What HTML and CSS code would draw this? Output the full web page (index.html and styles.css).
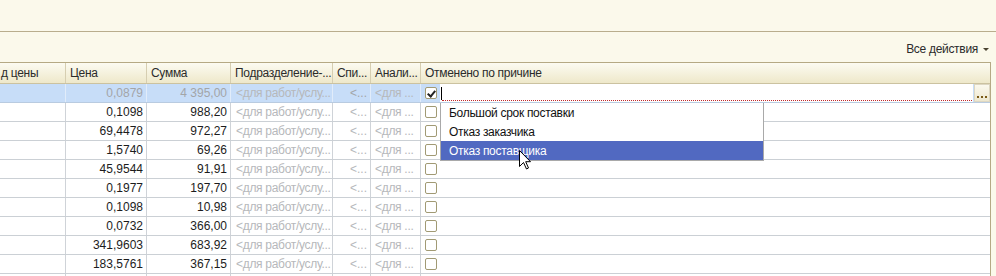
FILE: index.html
```html
<!DOCTYPE html>
<html lang="ru">
<head>
    <meta charset="UTF-8">
    <title>Товары</title>
    <link rel="stylesheet" href="styles.css">
</head>
<body>
    <div class="top"></div>
    <div class="toolbar">
        <span class="actions">Все действия <span class="arrow"></span></span>
    </div>

    <div class="grid">
        <div class="row head">
            <div class="cell c1">д цены</div>
            <div class="cell c2">Цена</div>
            <div class="cell c3">Сумма</div>
            <div class="cell c4">Подразделение-...</div>
            <div class="cell c5">Спи...</div>
            <div class="cell c6">Анали...</div>
            <div class="cell c7">Отменено по причине</div>
        </div>

        <div class="row sel">
            <div class="cell c1"></div>
            <div class="cell c2 num">0,0879</div>
            <div class="cell c3 num">4 395,00</div>
            <div class="cell c4 hint">&lt;для работ/услу...</div>
            <div class="cell c5 hint num">&lt;...</div>
            <div class="cell c6 hint">&lt;для ...</div>
            <div class="cell c7">
                <span class="check on"></span>
                <span class="edit"><span class="caret"></span></span>
                <span class="more"><i></i><i></i><i></i></span>
            </div>
        </div>
        <div id="rows"></div>

        <ul class="dropdown">
            <li>Большой срок поставки</li>
            <li>Отказ заказчика</li>
            <li class="active">Отказ поставщика</li>
        </ul>

        <svg class="pointer" width="13" height="20" viewBox="0 0 13 20">
            <path d="M0.5 0.5 L0.5 16.5 L4.5 12.5 L7.5 19 L9.5 18 L6.7 11.7 L11.5 11.7 Z" fill="#fff" stroke="#000" stroke-width="1"/>
        </svg>
    </div>

    <script>
        const data = [
            ['0,1098', '988,20'],
            ['69,4478', '972,27'],
            ['1,5740', '69,26'],
            ['45,9544', '91,91'],
            ['0,1977', '197,70'],
            ['0,1098', '10,98'],
            ['0,0732', '366,00'],
            ['341,9603', '683,92'],
            ['183,5761', '367,15'],
            ['', '']
        ];

        const rows = document.getElementById('rows');
        data.forEach(item => {
            const row = document.createElement('div');
            row.className = 'row';
            const hint = item[0] !== '';
            row.innerHTML =
                '<div class="cell c1"></div>' +
                '<div class="cell c2 num">' + item[0] + '</div>' +
                '<div class="cell c3 num">' + item[1] + '</div>' +
                '<div class="cell c4 hint">' + (hint ? '&lt;для работ/услу...' : '') + '</div>' +
                '<div class="cell c5 hint num">' + (hint ? '&lt;...' : '') + '</div>' +
                '<div class="cell c6 hint">' + (hint ? '&lt;для ...' : '') + '</div>' +
                '<div class="cell c7">' + (hint ? '<span class="check"></span>' : '') + '</div>';
            rows.appendChild(row);
        });
    </script>
</body>
</html>
```

FILE: styles.css
```css
html, body {
    margin: 0;
    padding: 0;
    height: 276px;
    overflow: hidden;
}
body {
    background-color: #fbf9eb;
    font-family: "Liberation Sans", Arial, sans-serif;
    font-size: 12px;
    letter-spacing: -0.3px;
    color: #1c1c1c;
}
.top {
    height: 31px;
    border-bottom: 1px solid #b9ad8d;
}
.toolbar {
    height: 30px;
    display: flex;
    justify-content: flex-end;
    align-items: center;
    padding-right: 7px;
}
.actions {
    display: flex;
    align-items: center;
    color: #2b2b2b;
    padding-top: 3px;
}
.arrow {
    margin-left: 5px;
    width: 0;
    height: 0;
    border-left: 3px solid transparent;
    border-right: 3px solid transparent;
    border-top: 3px solid #4a4230;
    margin-top: 1px;
}
.grid {
    position: relative;
    width: 990px;
    height: 214px;
    background-color: #fff;
    border-top: 1px solid #b5a984;
    border-right: 1px solid #b5a984;
    overflow: hidden;
}
.row {
    display: flex;
    height: 18px;
    border-bottom: 1px solid #cbd0d5;
}
.cell {
    box-sizing: border-box;
    height: 100%;
    line-height: 19px;
    padding: 0 4px;
    border-right: 1px solid #cfd3d8;
    white-space: nowrap;
    overflow: hidden;
}
.c1 { width: 66px; padding-left: 1px; }
.c2 { width: 81px; }
.c3 { width: 84px; }
.c4 { width: 102px; padding-left: 5px; padding-right: 1px; }
.c5 { width: 38px; }
.c6 { width: 50px; }
.c7 {
    flex: 1;
    border-right: none;
    display: flex;
    align-items: center;
    padding: 0;
}
.num {
    text-align: right;
    padding-right: 3px;
    letter-spacing: 0;
}
.hint {
    color: #b6b8bb;
}
.head {
    height: 20px;
    background: linear-gradient(#fcfbf1, #eee8ca);
    border-bottom: 1px solid #cbc2a0;
}
.head .cell {
    line-height: 21px;
    color: #2b2b2b;
    border-right-color: #d6ceb1;
    padding-left: 4px;
}
.head .c1 { padding-left: 1px; }
.sel {
    background-color: #c7ddf8;
    border-bottom-color: #b9cbe0;
}
.sel .cell {
    border-right-color: #e1ecfa;
}
.sel .num {
    color: #a3a5a8;
}
.check {
    box-sizing: border-box;
    width: 12px;
    height: 12px;
    margin-left: 4px;
    border: 1px solid #a19a74;
    border-radius: 2px;
    background-color: #fff;
    position: relative;
    flex-shrink: 0;
}
.check.on::after {
    content: "";
    position: absolute;
    left: 3px;
    top: 1px;
    width: 3px;
    height: 6px;
    border-right: 2px solid #222;
    border-bottom: 2px solid #222;
    transform: rotate(40deg);
}
.edit {
    flex: 1;
    height: 18px;
    margin-left: 3px;
    background-color: #fff;
    position: relative;
}
.caret {
    position: absolute;
    left: 1px;
    top: 3px;
    width: 1px;
    height: 13px;
    background-color: #000;
}
.edit::after {
    content: "";
    position: absolute;
    left: 2px;
    right: 1px;
    top: 16px;
    border-top: 1px dotted #c0282a;
}
.more {
    box-sizing: border-box;
    width: 16px;
    height: 18px;
    margin-left: 1px;
    background: linear-gradient(#fbf9ee, #ede7cf);
    border: 1px solid #ddd7c2;
    display: flex;
    align-items: flex-end;
    justify-content: center;
    gap: 2px;
    padding-bottom: 3px;
}
.more i {
    width: 2px;
    height: 2px;
    background-color: #7a5a16;
}
.dropdown {
    position: absolute;
    left: 440px;
    top: 40px;
    width: 322px;
    margin: 0;
    padding: 0;
    list-style: none;
    background-color: #fff;
    border: 1px solid #a9a9a9;
    border-top: none;
}
.dropdown li {
    height: 19px;
    line-height: 20px;
    padding-left: 8px;
    color: #111;
}
.dropdown li.active {
    background-color: #5169c1;
    color: #fff;
}
.pointer {
    position: absolute;
    left: 519px;
    top: 87px;
}
```
